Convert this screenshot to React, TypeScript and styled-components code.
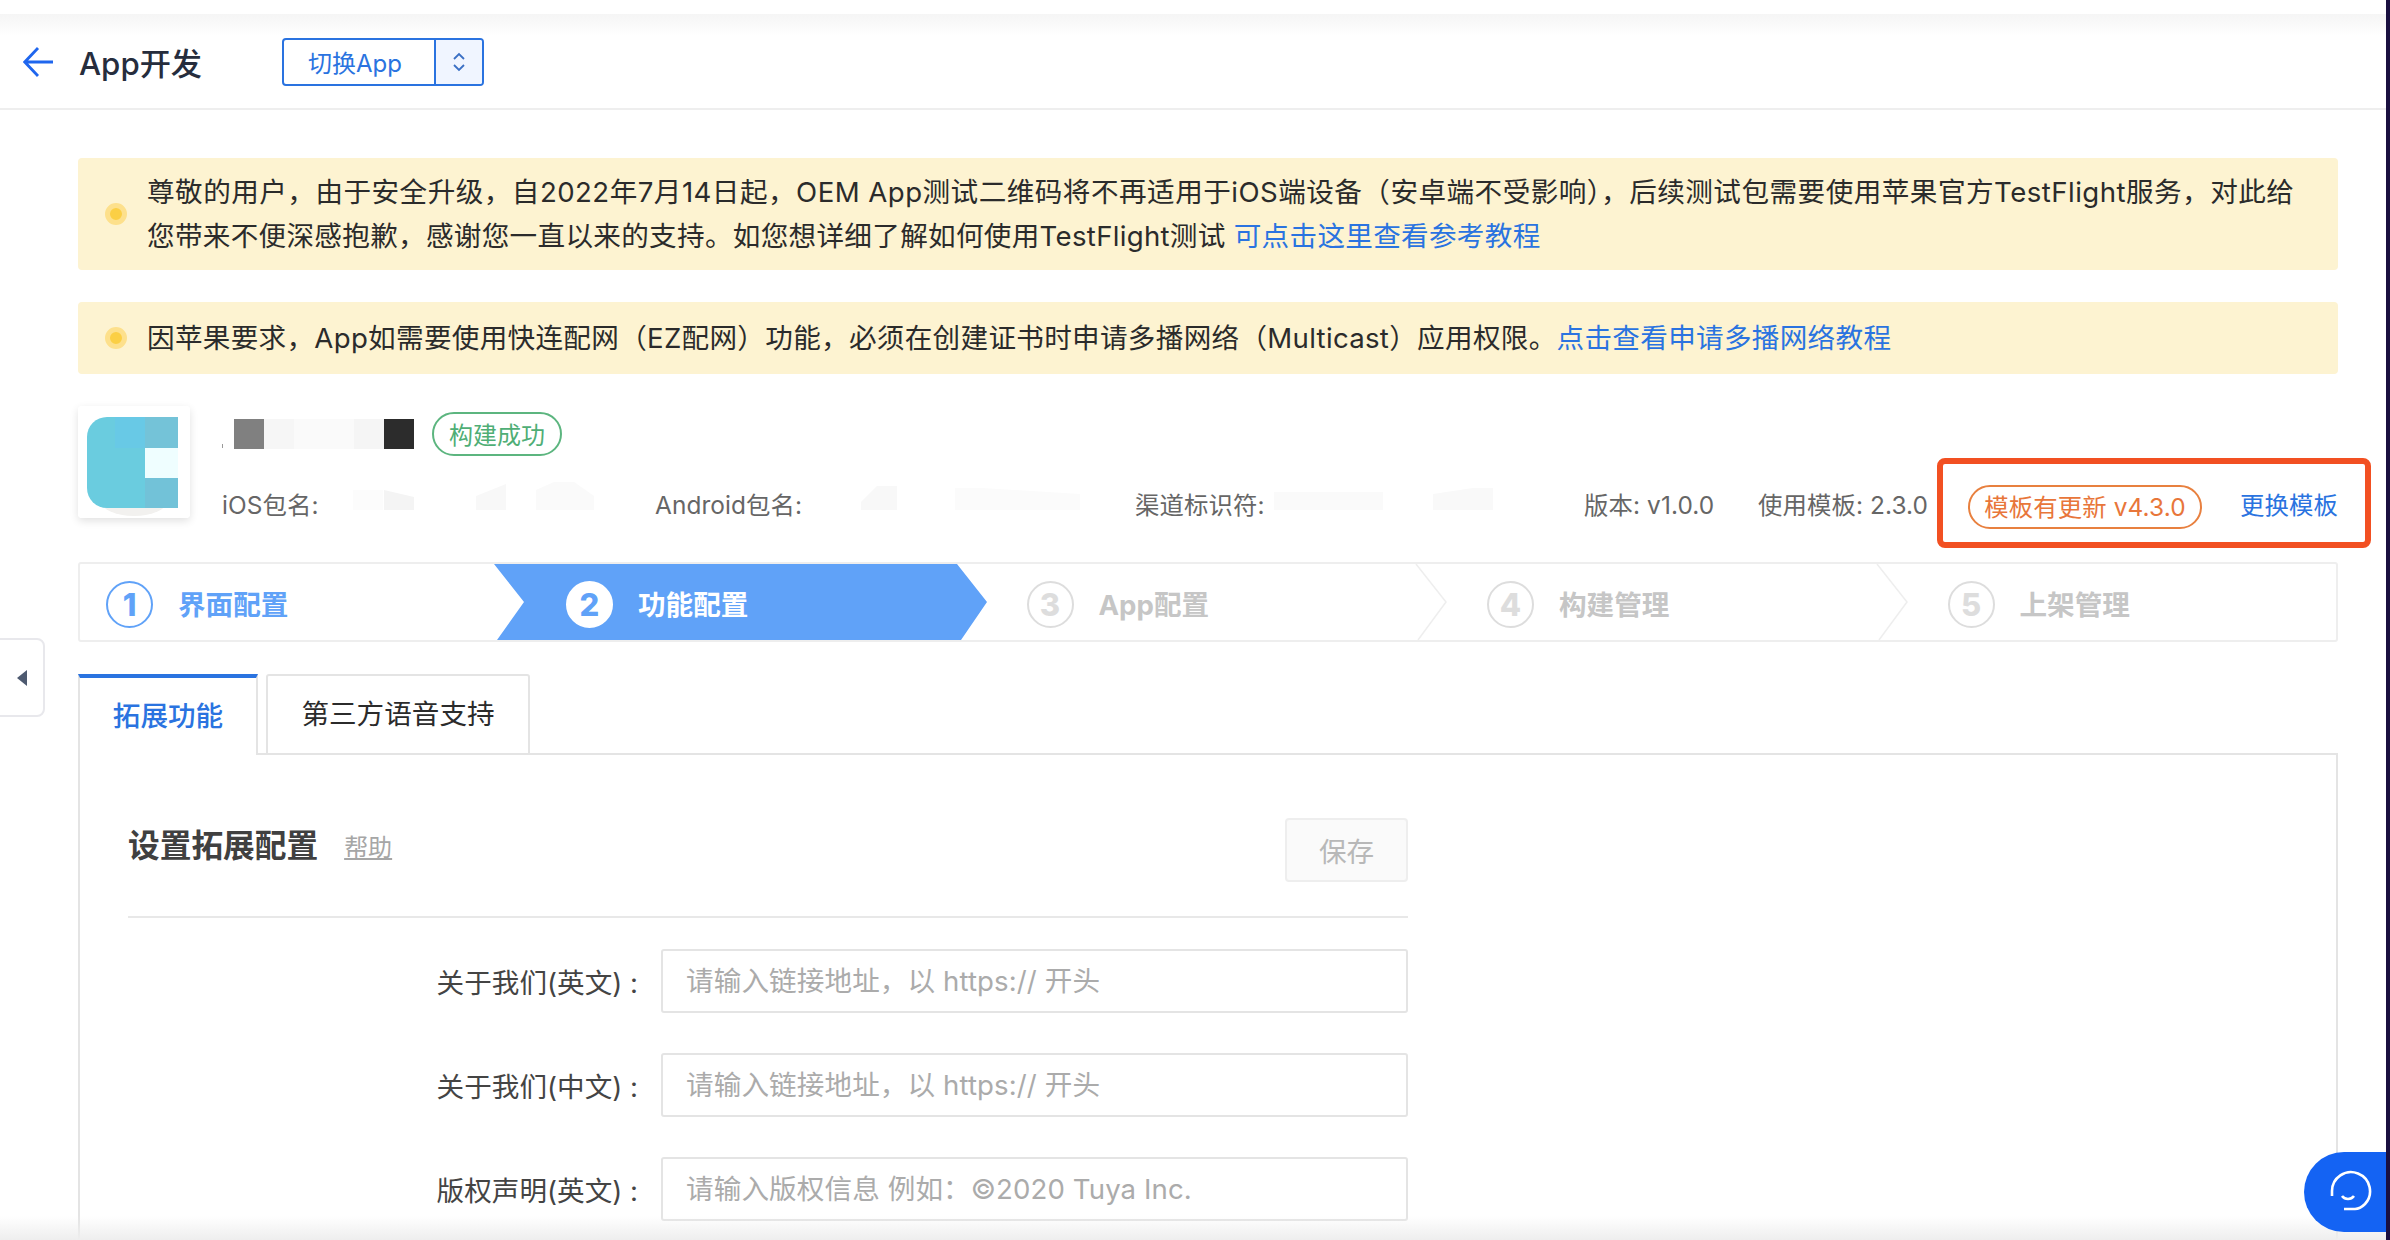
import React from "react";
import styled, { createGlobalStyle } from "styled-components";

const Global = createGlobalStyle`
  html, body { margin: 0; padding: 0; background: #fff; }
  * { box-sizing: border-box; }
  body { font-family: "Inter", "Noto Sans CJK SC", sans-serif; }
`;

const Page = styled.div`
  position: relative;
  width: 2390px;
  height: 1240px;
  overflow: hidden;
  background: #fff;
  border-right: 4px solid #1a1040;
`;

const Header = styled.header`
  height: 110px;
  padding: 16px 0 0 23px;
  display: flex;
  align-items: center;
  border-bottom: 2px solid #eeeeee;
  background: linear-gradient(to bottom, #fff 14px, #f5f5f5 14px, #fff 36px);
`;
const BackIcon = styled.svg`
  width: 30px;
  height: 30px;
  margin-right: 26px;
  flex: none;
`;
const Title = styled.h1`
  margin: -2px 50px 0 0;
  width: 153px;
  font-size: 31.2px;
  font-weight: 500;
  color: #262d3d;
`;
const Switch = styled.div`
  width: 202px;
  height: 48px;
  display: flex;
  border: 2px solid #2a73e0;
  border-radius: 4px;
  overflow: hidden;
`;
const SwitchLabel = styled.div`
  flex: 1;
  display: flex;
  align-items: center;
  padding: 0 0 2px 24px;
  font-size: 24px;
  color: #2a73e0;
`;
const SwitchArrows = styled.div`
  width: 48px;
  display: flex;
  align-items: center;
  justify-content: center;
  border-left: 2px solid #2a73e0;
  background: #f0f5ff;
`;

const Main = styled.main`
  padding: 48px 48px 0 78px;
`;
const Banner = styled.div<{ $single?: boolean }>`
  display: flex;
  align-items: center;
  gap: 20px;
  padding: ${(p) => (p.$single ? "14px" : "12px")} 27px;
  margin-bottom: 32px;
  background: #fdf3d1;
  border-radius: 4px;
  font-size: 27.6px;
  line-height: 44px;
  letter-spacing: 0.3px;
  color: #2b2b2b;
  white-space: nowrap;
`;
const WideLine = styled.span`
  letter-spacing: 0.47px;
`;
const Dot = styled.span`
  flex: none;
  width: 22px;
  height: 22px;
  border-radius: 50%;
  background: #fbcf45;
  border: 5px solid #fde08c;
`;
const Link = styled.a`
  color: #2a73e0;
`;

const AppInfo = styled.section`
  display: flex;
  gap: 32px;
  height: 112px;
`;
const AppIcon = styled.svg`
  width: 112px;
  height: 112px;
  flex: none;
  border-radius: 4px;
  box-shadow: 0 3px 8px rgba(0, 0, 0, 0.12);
`;
const AppMeta = styled.div`
  flex: 1;
  display: flex;
  flex-direction: column;
  padding-top: 6px;
`;
const NameRow = styled.div`
  display: flex;
  align-items: center;
  gap: 18px;
  height: 44px;
`;
const NameMask = styled.svg`
  width: 192px;
  height: 30px;
  flex: none;
`;
const Badge = styled.span`
  height: 44px;
  width: 130px;
  padding-bottom: 2px;
  display: flex;
  align-items: center;
  justify-content: center;
  border: 2px solid #5cb57f;
  border-radius: 22px;
  font-size: 24px;
  color: #4fae76;
`;
const InfoRow = styled.div`
  display: grid;
  grid-template-columns: 433px 480px 449px 174px 210px auto 1fr;
  align-items: center;
  margin-top: 26px;
  height: 44px;
  font-size: 24.4px;
  letter-spacing: 0.1px;
  color: #666;
  white-space: nowrap;
`;
const InfoCell = styled.div`
  display: flex;
  align-items: center;
  margin-top: -5px;
`;
const InfoText = styled.span`
  margin-top: -5px;
`;
const ValueMask = styled.svg`
  width: 290px;
  height: 48px;
  margin: 5px 0 0 0;
  flex: none;
`;
const UpdatePill = styled.span`
  width: 234px;
  height: 44px;
  margin-top: 2px;
  padding-bottom: 3px;
  display: flex;
  align-items: center;
  justify-content: center;
  border: 2px solid #e8803f;
  border-radius: 22px;
  color: #e8763a;
`;
const ChangeLink = styled.a`
  justify-self: end;
  margin-top: -5px;
  color: #2a73e0;
`;
const Highlight = styled.div`
  position: absolute;
  left: 1937px;
  top: 458px;
  width: 434px;
  height: 90px;
  border: 6px solid #f25022;
  border-radius: 8px;
  pointer-events: none;
`;

const Steps = styled.ol`
  list-style: none;
  margin: 44px 0 0;
  padding: 0;
  height: 80px;
  display: grid;
  grid-template-columns: 414px repeat(4, 1fr);
  border: 2px solid #eeeeee;
  border-radius: 3px;
`;
const Step = styled.li<{ $first?: boolean; $state: "done" | "active" | "todo" }>`
  position: relative;
  display: flex;
  align-items: center;
  gap: 25px;
  padding-left: ${(p) => (p.$first ? "26px" : "72px")};
  font-size: 27.6px;
  font-weight: 700;
  white-space: nowrap;
  color: ${(p) =>
    p.$state === "done" ? "#60a2f8" : p.$state === "active" ? "#fff" : "#c6c6c6"};
`;
const ActiveShape = styled.div`
  position: absolute;
  left: 0;
  top: 0;
  bottom: 0;
  width: 493px;
  background: #60a2f8;
  clip-path: polygon(0 0, 463px 0, 493px 50%, 467px 100%, 3px 100%, 30px 50%);
`;
const Chevron = styled.svg`
  position: absolute;
  left: 0;
  top: 0;
  width: 32px;
  height: 76px;
`;
const StepNum = styled.span<{ $state: "done" | "active" | "todo" }>`
  position: relative;
  top: 2px;
  width: 47px;
  height: 47px;
  display: flex;
  align-items: center;
  justify-content: center;
  border-radius: 50%;
  font-size: 31px;
  font-weight: 800;
  border: 2px solid
    ${(p) => (p.$state === "done" ? "#60a2f8" : p.$state === "active" ? "#fff" : "#dddddd")};
  background: ${(p) => (p.$state === "active" ? "#fff" : "transparent")};
  color: ${(p) => (p.$state === "todo" ? "#dddddd" : "#60a2f8")};
`;
const StepText = styled.span`
  position: relative;
  top: 1px;
`;

const Tabs = styled.div`
  display: flex;
  gap: 8px;
  margin-top: 32px;
  height: 81px;
  position: relative;
  z-index: 1;
`;
const Tab = styled.div<{ $active?: boolean }>`
  height: 81px;
  width: ${(p) => (p.$active ? "180px" : "264px")};
  padding-bottom: 6px;
  display: flex;
  align-items: center;
  justify-content: center;
  font-size: 27.6px;
  font-weight: ${(p) => (p.$active ? 500 : 400)};
  color: ${(p) => (p.$active ? "#2a73e0" : "#2b2b2b")};
  background: #fff;
  border: 2px solid #e4e4e4;
  border-top: ${(p) => (p.$active ? "4px solid #2a73e0" : "2px solid #e4e4e4")};
  border-bottom: ${(p) => (p.$active ? "none" : "2px solid #e4e4e4")};
  border-radius: ${(p) => (p.$active ? "0" : "3px 3px 0 0")};
`;
const Panel = styled.section`
  margin-top: -2px;
  height: 600px;
  padding: 63px 48px 0;
  border: 2px solid #e4e4e4;
`;
const PanelHead = styled.div`
  width: 1280px;
  display: flex;
  align-items: center;
  padding-bottom: 34px;
  border-bottom: 2px solid #e8e8e8;
`;
const PanelTitle = styled.h2`
  margin: -14px 0 0;
  font-size: 31.7px;
  font-weight: 700;
  color: #404040;
`;
const Help = styled.a`
  margin: -10px 0 0 26px;
  font-size: 24px;
  color: #a6a6a6;
  text-decoration: underline;
`;
const SaveButton = styled.button`
  margin-left: auto;
  width: 123px;
  height: 64px;
  background: #fafafa;
  border: 2px solid #eeeeee;
  border-radius: 4px;
  font: inherit;
  font-size: 27.6px;
  color: #b8b8b8;
`;
const Form = styled.div`
  width: 1280px;
  margin-top: 31px;
  display: flex;
  flex-direction: column;
  gap: 40px;
`;
const FormRow = styled.label`
  display: grid;
  grid-template-columns: 510px 747px;
  column-gap: 23px;
  align-items: center;
`;
const FormLabel = styled.span`
  text-align: right;
  font-size: 27.6px;
  color: #444;
  white-space: nowrap;
`;
const TextInput = styled.input`
  width: 100%;
  height: 64px;
  padding: 0 23px;
  border: 2px solid #e4e4e4;
  border-radius: 3px;
  outline: none;
  font: inherit;
  font-size: 27.6px;
  letter-spacing: 0.1px;
  &::placeholder {
    color: #ababab;
    opacity: 1;
  }
`;

const SideToggle = styled.button`
  position: absolute;
  left: -2px;
  top: 638px;
  width: 47px;
  height: 79px;
  padding: 0 0 0 2px;
  display: flex;
  align-items: center;
  background: #fff;
  border: 2px solid #e8e8ec;
  border-radius: 0 8px 8px 0;
`;
const SideArrow = styled.svg`
  width: 10px;
  height: 16px;
  margin-left: 15px;
`;
const BottomShade = styled.div`
  position: absolute;
  left: 0;
  right: 0;
  bottom: 0;
  height: 24px;
  background: linear-gradient(to bottom, rgba(240, 240, 240, 0), rgba(238, 238, 238, 1));
  pointer-events: none;
`;
const ChatButton = styled.button`
  position: absolute;
  left: 2304px;
  top: 1152px;
  width: 82px;
  height: 80px;
  padding: 0;
  border: none;
  border-radius: 40px 0 0 40px;
  background: #1463f3;
  display: flex;
  align-items: center;
  justify-content: center;
`;
const ChatIcon = styled.svg`
  width: 44px;
  height: 44px;
  margin-left: 9px;
`;

const steps = [
  { n: 1, text: "界面配置", state: "done" },
  { n: 2, text: "功能配置", state: "active" },
  { n: 3, text: "App配置", state: "todo" },
  { n: 4, text: "构建管理", state: "todo" },
  { n: 5, text: "上架管理", state: "todo" },
] as const;

const fields = [
  { label: "关于我们(英文) :", placeholder: "请输入链接地址，以 https:// 开头" },
  { label: "关于我们(中文) :", placeholder: "请输入链接地址，以 https:// 开头" },
  { label: "版权声明(英文) :", placeholder: "请输入版权信息 例如：©2020 Tuya Inc." },
];

export default function App() {
  return (
    <Page>
      <Global />
      <Header>
        <BackIcon viewBox="0 0 30 30" fill="none" stroke="#1f66ee" strokeWidth="2.8">
          <path d="M30 15H2M15 1 1.8 15 15 29" />
        </BackIcon>
        <Title>App开发</Title>
        <Switch>
          <SwitchLabel>切换App</SwitchLabel>
          <SwitchArrows>
            <svg width="14" height="20" viewBox="0 0 14 20" fill="none" stroke="#3a6fc4" strokeWidth="1.8">
              <path d="M2 7l5-5 5 5M2 13l5 5 5-5" />
            </svg>
          </SwitchArrows>
        </Switch>
      </Header>
      <Main>
        <Banner>
          <Dot />
          <div>
            <WideLine>
              尊敬的用户，由于安全升级，自2022年7月14日起，OEM App测试二维码将不再适用于iOS端设备（安卓端不受影响），后续测试包需要使用苹果官方TestFlight服务，对此给
            </WideLine>
            <br />
            您带来不便深感抱歉，感谢您一直以来的支持。如您想详细了解如何使用TestFlight测试 <Link>可点击这里查看参考教程</Link>
          </div>
        </Banner>
        <Banner $single>
          <Dot />
          <div>
            因苹果要求，App如需要使用快连配网（EZ配网）功能，必须在创建证书时申请多播网络（Multicast）应用权限。<Link>点击查看申请多播网络教程</Link>
          </div>
        </Banner>
        <AppInfo>
          <AppIcon viewBox="0 0 112 112">
            <rect width="112" height="112" fill="#fff" />
            <ellipse cx="56" cy="94" rx="34" ry="16" fill="#f2f1ef" />
            <rect x="9" y="11" width="91" height="91" rx="20" fill="#6accdf" />
            <rect x="37" y="11" width="30" height="31" fill="#68c9e6" />
            <rect x="67" y="11" width="33" height="31" fill="#74c3d8" />
            <rect x="67" y="42" width="33" height="30" fill="#effeff" />
            <rect x="67" y="72" width="33" height="30" fill="#72c2d8" />
          </AppIcon>
          <AppMeta>
            <NameRow>
              <NameMask viewBox="0 0 192 30">
                <rect x="0" y="25" width="1" height="4" fill="#999" />
                <rect x="12" width="30" height="30" fill="#808080" />
                <rect x="42" width="30" height="30" fill="#f6f6f6" />
                <rect x="72" width="60" height="30" fill="#fafafa" />
                <rect x="132" width="30" height="30" fill="#f5f5f5" />
                <rect x="162" width="30" height="30" fill="#2c2c2c" />
              </NameMask>
              <Badge>构建成功</Badge>
            </NameRow>
            <InfoRow>
              <InfoCell>
                iOS包名:
                <ValueMask viewBox="0 0 290 48">
                  <rect x="34" y="8" width="30" height="20" fill="#fcfcfc" />
                  <path d="M65 8 95 15V28H65z" fill="#f4f4f4" />
                  <path d="M157 14 187 2V28H157z" fill="#f8f8f8" />
                  <path d="M217 8 235 0H255L275 14V28H217z" fill="#fafafa" />
                </ValueMask>
              </InfoCell>
              <InfoCell>
                Android包名:
                <ValueMask viewBox="0 0 290 48">
                  <path d="M59 20 75 4H95V28H59z" fill="#f8f8f8" />
                  <path d="M153 6H180L278 12V28H153z" fill="#fbfbfb" />
                </ValueMask>
              </InfoCell>
              <InfoCell>
                渠道标识符:
                <ValueMask viewBox="0 0 290 48">
                  <rect x="9" y="10" width="109" height="18" fill="#fafafa" />
                  <path d="M168 12 208 6H228V28H168z" fill="#f9f9f9" />
                </ValueMask>
              </InfoCell>
              <InfoText>版本: v1.0.0</InfoText>
              <InfoText>使用模板: 2.3.0</InfoText>
              <UpdatePill>模板有更新 v4.3.0</UpdatePill>
              <ChangeLink>更换模板</ChangeLink>
            </InfoRow>
          </AppMeta>
        </AppInfo>
        <Steps>
          {steps.map((s, i) => (
            <Step key={s.n} $first={i === 0} $state={s.state}>
              {s.state === "active" && <ActiveShape />}
              {s.state === "todo" && i > 2 && (
                <Chevron viewBox="0 0 32 76" fill="none" stroke="#eeeeee" strokeWidth="1.5">
                  <path d="M1 0 31 38 3 76" />
                </Chevron>
              )}
              <StepNum $state={s.state}>{s.n}</StepNum>
              <StepText>{s.text}</StepText>
            </Step>
          ))}
        </Steps>
        <Tabs>
          <Tab $active>拓展功能</Tab>
          <Tab>第三方语音支持</Tab>
        </Tabs>
        <Panel>
          <PanelHead>
            <PanelTitle>设置拓展配置</PanelTitle>
            <Help>帮助</Help>
            <SaveButton>保存</SaveButton>
          </PanelHead>
          <Form>
            {fields.map((f) => (
              <FormRow key={f.label}>
                <FormLabel>{f.label}</FormLabel>
                <TextInput placeholder={f.placeholder} readOnly />
              </FormRow>
            ))}
          </Form>
        </Panel>
      </Main>
      <Highlight />
      <SideToggle>
        <SideArrow viewBox="0 0 10 16">
          <path d="M10 0v16L0 8z" fill="#4e5a70" />
        </SideArrow>
      </SideToggle>
      <BottomShade />
      <ChatButton>
        <ChatIcon viewBox="0 0 44 44" fill="none" stroke="#fff" strokeWidth="2.6">
          <path d="M4 26V21a19 19 0 1 1 33 13c-3 3-6 5-10 5H16" />
          <path d="M14 26c3 4 9 4 12 0" />
        </ChatIcon>
      </ChatButton>
    </Page>
  );
}
